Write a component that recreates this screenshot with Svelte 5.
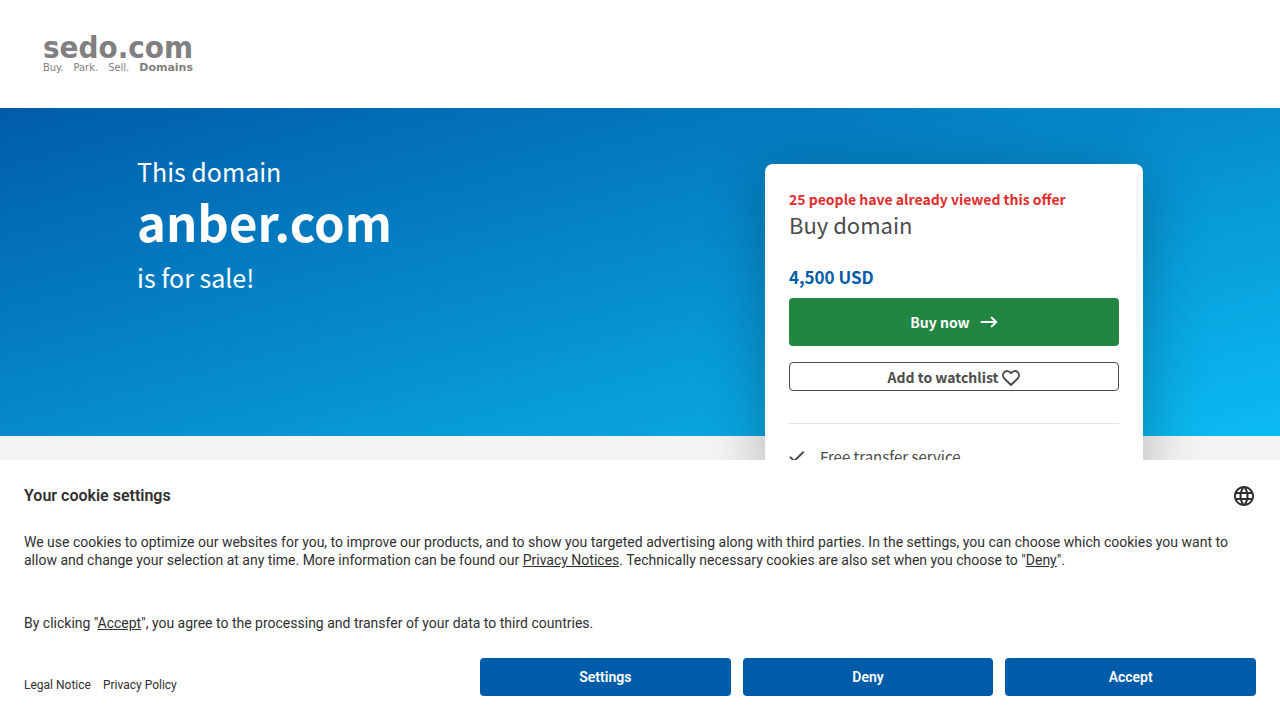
<script lang="ts">
	const domain = 'anber.com';
	const price = '4,500 USD';
	const views = 25;

	let watched = $state(false);
	let showBanner = $state(true);

	function closeBanner() {
		showBanner = false;
	}
</script>

<div class="page">
	<header class="header">
		<a href="/" class="logo">
			<span class="logo-name">sedo.com</span>
			<span class="logo-tagline">
				<span>Buy.</span>
				<span>Park.</span>
				<span>Sell.</span>
				<strong>Domains</strong>
			</span>
		</a>
	</header>

	<main class="hero">
		<div class="container">
			<h1 class="title">
				<span>This domain</span>
				<strong>{domain}</strong>
				<span>is for sale!</span>
			</h1>

			<div class="card">
				<p class="views">{views} people have already viewed this offer</p>
				<h2>Buy domain</h2>
				<p class="price">{price}</p>
				<button type="button" class="buy-btn">
					Buy now
					<svg width="18" height="12" viewBox="0 0 18 12" fill="none" stroke="currentColor" stroke-width="2" stroke-linecap="round" stroke-linejoin="round" aria-hidden="true">
						<path d="M1.5 6H16M11.7 1.6 16.2 6l-4.5 4.4" />
					</svg>
				</button>
				<button type="button" class="watch-btn" aria-pressed={watched} onclick={() => (watched = !watched)}>
					Add to watchlist
					<svg width="18" height="18" viewBox="0 -2 18 18" fill={watched ? 'currentColor' : 'none'} stroke="currentColor" stroke-width="1.9" stroke-linejoin="round" aria-hidden="true">
						<path d="M9 15 2.3 8.5C.5 6.6.6 3.9 2.1 2.3c1.7-1.8 5-1.7 6.9.9 1.9-2.6 5.2-2.7 6.9-.9 1.5 1.6 1.6 4.3-.2 6.2z" />
					</svg>
				</button>
				<ul class="benefits">
					<li>
						<svg width="16" height="12" viewBox="0 0 16 12" fill="none" stroke="currentColor" stroke-width="2" stroke-linecap="round" stroke-linejoin="round" aria-hidden="true">
							<path d="M1.5 6.4 5.2 10 14.2 1.2" />
						</svg>
						Free transfer service
					</li>
				</ul>
			</div>
		</div>
	</main>
</div>

{#if showBanner}
	<section class="banner">
		<div class="banner-head">
			<h2>Your cookie settings</h2>
			<button type="button" class="lang-btn" aria-label="Language">
				<svg width="24" height="24" viewBox="0 0 24 24" fill="currentColor" aria-hidden="true">
					<path d="M11.99 2C6.47 2 2 6.48 2 12s4.47 10 9.99 10C17.52 22 22 17.52 22 12S17.52 2 11.99 2zm6.93 6h-2.95c-.32-1.25-.78-2.45-1.38-3.56 1.84.63 3.37 1.91 4.33 3.56zM12 4.04c.83 1.2 1.48 2.53 1.91 3.96h-3.82c.43-1.43 1.08-2.76 1.91-3.96zM4.26 14C4.1 13.36 4 12.69 4 12s.1-1.36.26-2h3.38c-.08.66-.14 1.32-.14 2s.06 1.34.14 2H4.26zm.82 2h2.95c.32 1.25.78 2.45 1.38 3.56-1.84-.63-3.37-1.9-4.33-3.56zm2.95-8H5.08c.96-1.66 2.49-2.93 4.33-3.56C8.81 5.55 8.35 6.75 8.03 8zM12 19.96c-.83-1.2-1.48-2.53-1.91-3.96h3.82c-.43 1.43-1.08 2.76-1.91 3.96zM14.34 14H9.66c-.09-.66-.16-1.32-.16-2s.07-1.35.16-2h4.68c.09.65.16 1.32.16 2s-.07 1.34-.16 2zm.25 5.56c.6-1.11 1.06-2.31 1.38-3.56h2.95c-.96 1.65-2.49 2.93-4.33 3.56zM16.36 14c.08-.66.14-1.32.14-2s-.06-1.34-.14-2h3.38c.16.64.26 1.31.26 2s-.1 1.36-.26 2h-3.38z" />
				</svg>
			</button>
		</div>

		<p>
			We use cookies to optimize our websites for you, to improve our products, and to show you targeted advertising
			along with third parties. In the settings, you can choose which cookies you want to allow and change your
			selection at any time. More information can be found our <a href="/privacy">Privacy Notices</a>. Technically
			necessary cookies are also set when you choose to "<a href="#deny">Deny</a>".
		</p>
		<p class="consent">
			By clicking "<a href="#accept">Accept</a>", you agree to the processing and transfer of your data to third
			countries.
		</p>

		<div class="banner-foot">
			<nav class="legal">
				<a href="/legal">Legal Notice</a>
				<a href="/privacy">Privacy Policy</a>
			</nav>
			<div class="actions">
				<button type="button">Settings</button>
				<button type="button" onclick={closeBanner}>Deny</button>
				<button type="button" onclick={closeBanner}>Accept</button>
			</div>
		</div>
	</section>
{/if}

<style>
	:global(body) {
		margin: 0;
		background: #f4f4f4;
	}

	.page {
		font-family: 'Source Sans Pro', 'Noto Sans CJK SC', sans-serif;
		color: #4c4c4c;
	}

	h1,
	h2,
	p,
	ul {
		margin: 0;
		padding: 0;
	}

	.header {
		display: flex;
		height: 108px;
		box-sizing: border-box;
		padding: 32px 43px;
		background: #fff;
	}

	.logo {
		display: flex;
		flex-direction: column;
		width: 150px;
		color: #808080;
		text-decoration: none;
	}

	.logo-name {
		font: bold 31px/30px 'DejaVu Sans Condensed', Tahoma, sans-serif;
	}

	.logo-tagline {
		display: flex;
		justify-content: space-between;
		font: 11px/12px 'DejaVu Sans Condensed', Tahoma, sans-serif;
	}

	.logo-tagline strong {
		font-family: 'DejaVu Sans', Verdana, sans-serif;
	}

	/* the blue band ends above the bottom of the card */
	.hero {
		padding: 0 24px 40px;
		background: linear-gradient(165deg, #005ca9, #0bbbf2) top / 100% 328px no-repeat;
	}

	.container {
		display: flex;
		justify-content: space-between;
		align-items: flex-start;
		max-width: 1006px;
		margin: 0 auto;
	}

	.title {
		display: flex;
		flex-direction: column;
		padding-top: 43px;
		font-size: 25px;
		line-height: 40px;
		font-weight: 400;
		color: #fff;
	}

	.title strong {
		margin-bottom: 6px;
		font-size: 49px;
		line-height: 60px;
		font-weight: 600;
	}

	.card {
		width: 378px;
		box-sizing: border-box;
		margin-top: 56px;
		padding: 23px 24px;
		background: #fff;
		border-radius: 8px;
		box-shadow: 0 8px 60px rgba(0, 0, 0, 0.28);
	}

	.views {
		font-size: 14px;
		line-height: 24px;
		font-weight: 600;
		color: #e12d2d;
	}

	.card h2 {
		font-size: 22px;
		line-height: 26px;
		font-weight: 400;
	}

	.price {
		margin: 26px 0 7px;
		font-size: 17px;
		line-height: 28px;
		font-weight: 600;
		color: #005ca9;
	}

	.card button {
		display: flex;
		align-items: center;
		justify-content: center;
		width: 100%;
		padding: 0;
		border-radius: 4px;
		font-family: inherit;
		font-size: 14px;
		line-height: 20px;
		font-weight: 600;
		cursor: pointer;
	}

	.card .buy-btn {
		gap: 10px;
		height: 48px;
		border: 0;
		background: #228542;
		color: #fff;
	}

	.card .watch-btn {
		gap: 4px;
		height: 29px;
		margin-top: 16px;
		border: 1px solid #4c4c4c;
		background: #fff;
		color: #4c4c4c;
	}

	.benefits {
		margin-top: 32px;
		padding-top: 21px;
		border-top: 1px solid #e3e3e3;
		list-style: none;
		font-size: 15px;
		line-height: 24px;
	}

	.benefits li {
		display: flex;
		align-items: center;
		gap: 15px;
	}

	.banner {
		position: fixed;
		right: 0;
		bottom: 0;
		left: 0;
		padding: 24px;
		border-radius: 4px 4px 0 0;
		background: #fff;
		font-family: Roboto, sans-serif;
		font-size: 14px;
		line-height: 18px;
		color: #303030;
	}

	.banner-head {
		display: flex;
		justify-content: space-between;
		align-items: center;
		margin-bottom: 25px;
	}

	.banner-head h2 {
		font-size: 16px;
		line-height: 24px;
		font-weight: 600;
	}

	.lang-btn {
		display: flex;
		padding: 0;
		border: 0;
		background: none;
		color: #303030;
		cursor: pointer;
	}

	.banner a {
		color: inherit;
	}

	.consent {
		margin-top: 45px;
	}

	.banner-foot {
		display: grid;
		grid-template-columns: 444px 1fr;
		gap: 12px;
		align-items: center;
		margin-top: 26px;
	}

	.legal {
		display: flex;
		gap: 12px;
		padding-top: 16px;
		font-size: 12px;
	}

	.legal a {
		text-decoration: none;
	}

	.actions {
		display: grid;
		grid-template-columns: repeat(3, 1fr);
		gap: 12px;
	}

	.actions button {
		height: 38px;
		padding: 0;
		border: 0;
		border-radius: 4px;
		background: #005ca9;
		font-family: inherit;
		font-size: 14px;
		font-weight: 600;
		color: #fff;
		cursor: pointer;
	}
</style>
